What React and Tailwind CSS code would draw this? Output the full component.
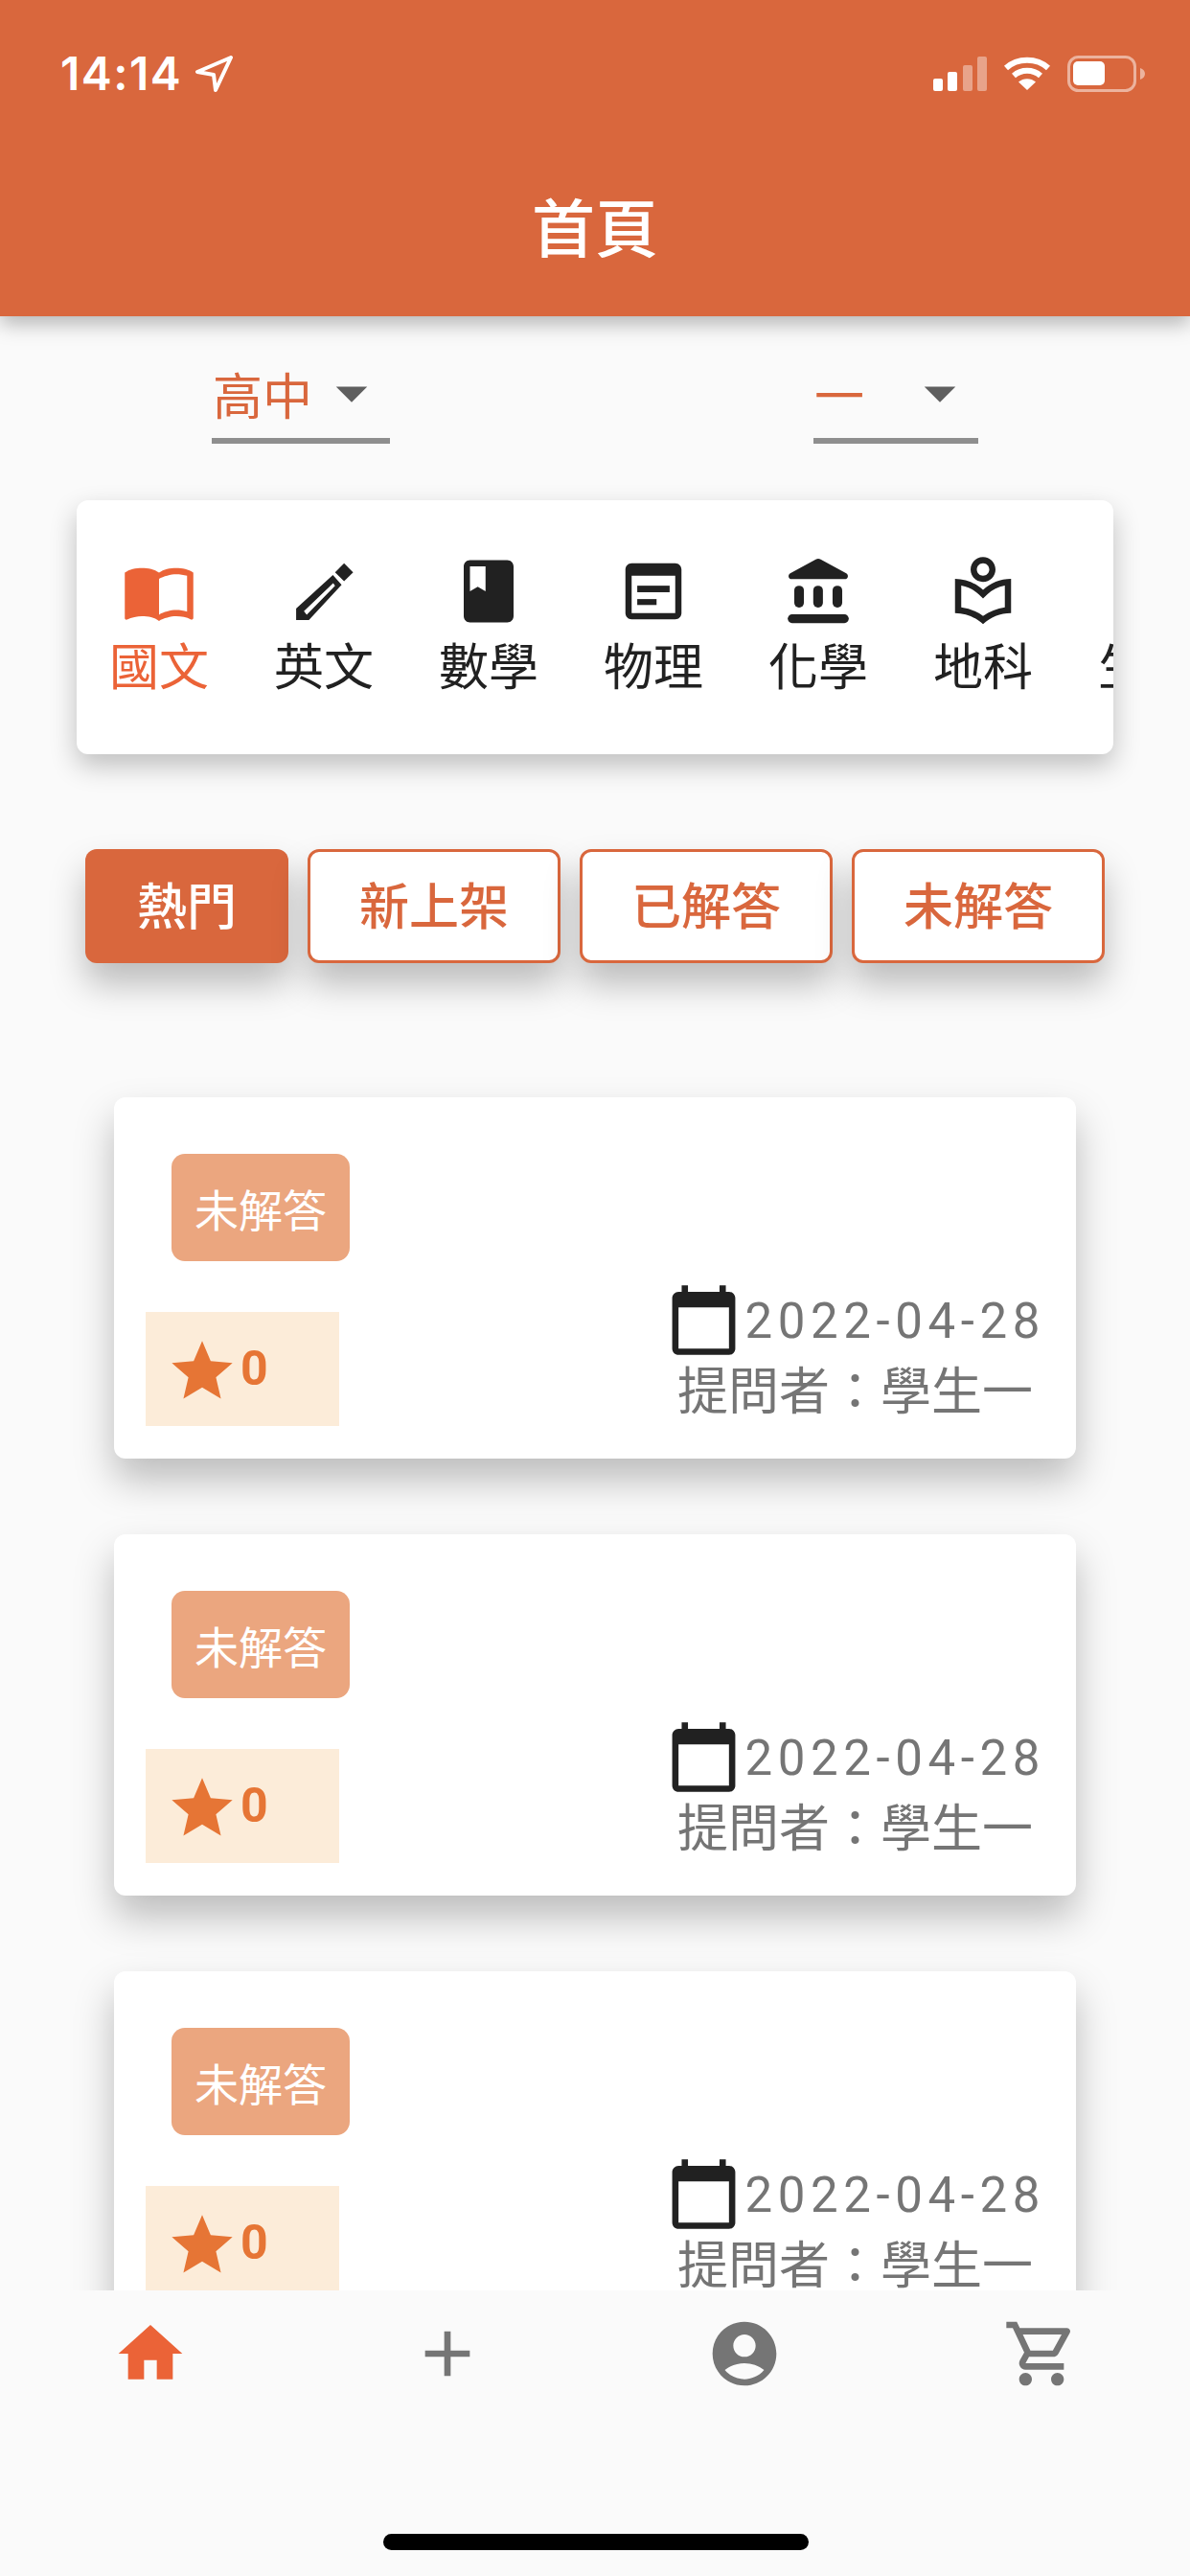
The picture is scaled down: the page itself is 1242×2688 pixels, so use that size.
import React from 'react';
import {
  MdImportContacts, MdBook, MdOutlineLocalLibrary,
  MdStar, MdCalendarToday, MdHome, MdAdd, MdAccountCircle, MdOutlineShoppingCart, MdArrowDropDown,
} from 'react-icons/md';

const cjk = "font-['Roboto','Noto_Sans_CJK_TC',sans-serif]";

const PencilIcon = ({ className }) => (
  <svg viewBox="0 0 24 24" fill="currentColor" className={className}>
    <path d="M18.5 3l2.9 2.9-2.9 2.9-2.9-2.9z" />
    <path fillRule="evenodd" d="M3.1 17.5L14.9 6.8l2.8 3.1L7.2 21.2H3.1zM5.6 18.4l.9 1.1 9.1-9.3-.6-.8z" />
  </svg>
);

const PaperIcon = ({ className }) => (
  <svg viewBox="0 0 24 24" fill="currentColor" className={className}>
    <path d="M19 3H5c-1.1 0-2 .9-2 2v14c0 1.1.9 2 2 2h14c1.1 0 2-.9 2-2V5c0-1.1-.9-2-2-2zm0 16H5V7h14v12z" />
    <rect x="6.8" y="10.2" width="10.4" height="2.1" />
    <rect x="6.8" y="14.5" width="6.2" height="1.9" />
  </svg>
);

const BankIcon = ({ className }) => (
  <svg viewBox="0 0 24 24" fill="currentColor" className={className}>
    <path d="M11.2 1.8a1.5 1.5 0 0 1 1.6 0l8.2 4.4c.9.5.6 1.9-.5 1.9H3.5c-1.1 0-1.4-1.4-.5-1.9z" />
    <rect x="4.3" y="10.2" width="3.1" height="7" rx="1.5" />
    <rect x="10.4" y="10.2" width="3.1" height="7" rx="1.5" />
    <rect x="16.6" y="10.2" width="3.1" height="7" rx="1.5" />
    <rect x="2.2" y="19.4" width="19.6" height="2.8" rx="1.4" />
  </svg>
);

const subjects = [
  { label: '國文', Icon: MdImportContacts, active: true },
  { label: '英文', Icon: PencilIcon },
  { label: '數學', Icon: MdBook },
  { label: '物理', Icon: PaperIcon },
  { label: '化學', Icon: BankIcon },
  { label: '地科', Icon: MdOutlineLocalLibrary },
  { label: '生物', Icon: MdBook },
];

const StatusBar = () => (
  <div className="flex items-center justify-between h-[152px] pl-[63px] pr-[47px] pt-[2px] text-white">
    <div className="flex items-center gap-[14px]">
      <span className="font-['Inter',sans-serif] font-semibold text-[48px] leading-[52px] tracking-[1.5px]">14:14</span>
      <svg width="40" height="38" viewBox="0 0 40 38" fill="none" stroke="white" strokeWidth="4" strokeLinejoin="round">
        <path d="M37 2 L2 17 L19 20 L21 36 Z" />
      </svg>
    </div>
    <div className="flex items-center gap-[17px]">
      <svg width="56" height="36" viewBox="0 0 56 36">
        <rect x="0" y="23" width="10" height="13" rx="2" fill="white" />
        <rect x="15" y="16" width="10" height="20" rx="2" fill="white" />
        <rect x="31" y="9" width="10" height="27" rx="2" fill="white" opacity="0.4" />
        <rect x="46" y="0" width="10" height="36" rx="2" fill="white" opacity="0.4" />
      </svg>
      <svg width="50" height="36" viewBox="0 0 50 36" fill="none" stroke="white" strokeWidth="6">
        <path d="M3 12 C15 1 35 1 47 12" />
        <path d="M11 20 C19 13 31 13 39 20" />
        <path d="M25 35 L16 26.5 C21 22 29 22 34 26.5 Z" fill="white" stroke="none" />
      </svg>
      <svg width="81" height="38" viewBox="0 0 81 38" fill="none">
        <rect x="1.5" y="1.5" width="69" height="35" rx="10" stroke="white" strokeOpacity="0.5" strokeWidth="3" />
        <rect x="6" y="6" width="33" height="25" rx="5" fill="white" />
        <path d="M76 13 C79 14 81 16 81 19 C81 22 79 24 76 25 Z" fill="white" opacity="0.5" />
      </svg>
    </div>
  </div>
);

const Header = () => (
  <header className="shrink-0 relative z-20 bg-[#d9673d] h-[330px] shadow-[0_8px_20px_rgba(0,0,0,0.28)]">
    <StatusBar />
    <h1 className="text-center text-white font-medium text-[66px] leading-[96px] pt-[41px]">首頁</h1>
  </header>
);

const Dropdown = ({ value, width }) => (
  <div className={`${width} h-[79px] border-b-[6px] border-[#8e8e8e] flex items-start justify-between`}>
    <span className="pl-[1px] pt-[2px] text-[52px] leading-[60px] text-[#d9673d]">{value}</span>
    <MdArrowDropDown className="text-[#5f5f5f] w-[78px] h-[78px] -mt-[13px] mr-[1px]" />
  </div>
);

const Subject = ({ label, Icon, active }) => (
  <div className="w-[172px] shrink-0 flex flex-col items-center">
    <Icon className={`w-[78px] h-[78px] ${active ? 'text-[#eb6337]' : 'text-[#212121]'}`} />
    <span className={`mt-[11px] text-[52px] leading-[62px] ${active ? 'text-[#eb6337]' : 'text-[#212121]'}`}>{label}</span>
  </div>
);

const QuestionCard = () => (
  <div className="mx-[119px] mb-[79px] h-[377px] shrink-0 bg-white rounded-[12px] shadow-[0_22px_40px_rgba(0,0,0,0.25)]">
    <div className="pt-[59px] pl-[60px]">
      <div className="w-[186px] h-[112px] pt-[8px] rounded-[14px] bg-[#eba67f] flex items-center justify-center text-white text-[46px]">未解答</div>
    </div>
    <div className="flex items-start justify-between pl-[33px] pr-[37px] pt-[19px]">
      <div className="mt-[34px] w-[202px] h-[119px] pt-[5px] bg-[#fcecd9] flex items-center pl-[24px]">
        <MdStar className="w-[76px] h-[76px] text-[#e67535] -ml-[3px]" />
        <span className="font-['Roboto',sans-serif] font-bold text-[50px] text-[#e67535] -mt-[6px] ml-[2px]">0</span>
      </div>
      <div className="flex flex-col items-end">
        <div className="flex items-center mt-[3px]">
          <MdCalendarToday className="w-[79px] h-[79px] text-[#212121]" />
          <span className="font-['Roboto',sans-serif] text-[51px] leading-[72px] tracking-[5.6px] text-[#757575] mt-[2px] ml-[4px] -mr-[5px]">2022-04-28</span>
        </div>
        <span className="text-[53px] leading-[60px] text-[#757575] pr-[8px] mt-[6px]">提問者：學生一</span>
      </div>
    </div>
  </div>
);

const filters = ['新上架', '已解答', '未解答'];

const BottomNav = () => (
  <nav className="shrink-0 relative z-20 bg-[#fafafa] h-[298px]">
    <div className="grid grid-cols-4 pt-[26px] pl-[2px]">
      <div className="flex justify-center"><MdHome className="w-[80px] h-[80px] text-[#eb6337]" /></div>
      <div className="flex justify-center"><MdAdd className="w-[80px] h-[80px] text-[#757575]" /></div>
      <div className="flex justify-center"><MdAccountCircle className="w-[80px] h-[80px] text-[#757575]" /></div>
      <div className="flex justify-center"><MdOutlineShoppingCart className="w-[80px] h-[80px] text-[#757575]" /></div>
    </div>
    <div className="absolute bottom-[27px] left-[400px] w-[444px] h-[17px] rounded-full bg-black" />
  </nav>
);

export default function App() {
  return (
    <div className={`w-[1242px] h-[2688px] flex flex-col overflow-hidden bg-[#fafafa] ${cjk}`}>
      <Header />
      <main className="flex-1 min-h-0 overflow-hidden flex flex-col">
        {/* grade pickers */}
        <div className="flex shrink-0 pt-[54px] pl-[221px]">
          <Dropdown value="高中" width="w-[186px]" />
          <div className="w-[442px]" />
          <Dropdown value="一" width="w-[172px]" />
        </div>

        {/* subjects */}
        <div className="shrink-0 mx-[80px] mt-[59px] h-[265px] rounded-[12px] bg-white shadow-[0_12px_28px_rgba(0,0,0,0.24)] overflow-hidden flex pt-[56px]">
          {subjects.map((s) => <Subject key={s.label} {...s} />)}
        </div>

        {/* filters */}
        <div className="shrink-0 flex mt-[99px] pl-[89px] gap-[20px] mb-[140px]">
          <div className="w-[212px] h-[119px] pt-[5px] rounded-[12px] bg-[#d9673d] text-white font-medium text-[52px] flex items-center justify-center shadow-[0_22px_36px_rgba(0,0,0,0.25)]">熱門</div>
          {filters.map((f) => (
            <div key={f} className="w-[264px] h-[119px] pt-[5px] rounded-[12px] border-[3px] border-[#d9673d] bg-white text-[#d9673d] font-medium text-[52px] flex items-center justify-center shadow-[0_22px_36px_rgba(0,0,0,0.25)]">{f}</div>
          ))}
        </div>

        {/* questions */}
        <QuestionCard />
        <QuestionCard />
        <QuestionCard />
      </main>
      <BottomNav />
    </div>
  );
}
